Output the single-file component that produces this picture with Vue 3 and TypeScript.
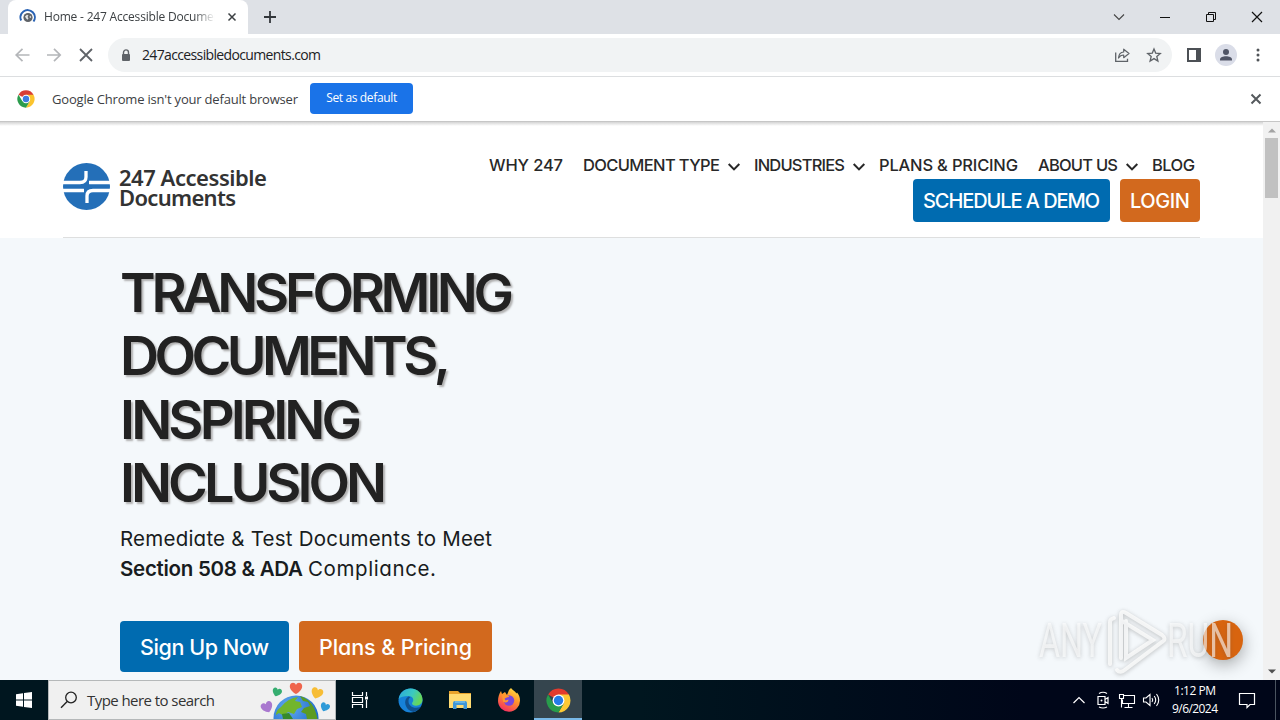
<script setup lang="ts">
import type { Directive } from 'vue'

interface NavItem {
  label: string
  width: number
  menu: boolean
}

const navItems: NavItem[] = [
  { label: 'WHY 247', width: 74, menu: false },
  { label: 'DOCUMENT TYPE', width: 137, menu: true },
  { label: 'INDUSTRIES', width: 91, menu: true },
  { label: 'PLANS & PRICING', width: 139, menu: false },
  { label: 'ABOUT US', width: 80, menu: true },
  { label: 'BLOG', width: 43, menu: false },
]

const headline: { text: string; width: number }[] = [
  { text: 'TRANSFORMING', width: 394 },
  { text: 'DOCUMENTS,', width: 331 },
  { text: 'INSPIRING', width: 242 },
  { text: 'INCLUSION', width: 267 },
]

// Spreads or tightens the letters of a label so that it fills a given width.
const vFit: Directive<HTMLElement, number> = {
  mounted(el, binding) {
    const count = (el.textContent ?? '').length
    const natural = el.getBoundingClientRect().width
    el.style.letterSpacing = `${(binding.value - natural) / Math.max(count - 1, 1)}px`
    el.style.width = `${binding.value}px`
  },
}
</script>

<template>
  <div class="desktop">
    <div class="tabstrip">
      <div class="tab">
        <svg class="favicon" width="18" height="18" viewBox="0 0 18 18">
          <path d="M2.200 12.500A7.200 7.200 0 1 1 14.500 13.500" fill="none" stroke="#2a63b4" stroke-width="2" />
          <circle cx="9" cy="9.500" r="4.600" fill="#5f6368" />
          <path d="M6 8.500 8 6.800l1.500.7-1 1.500 1 1.200-1 1.600-1.500-1.500zM11 7.500l1.300 1.500-.8 1-1-.8z" fill="#e4e6e8" />
        </svg>
        <span class="tab-title"><span v-fit="177" class="fit">Home - 247 Accessible Documen</span></span>
        <svg class="tab-close" width="10" height="10" viewBox="0 0 10 10"><path d="M1.500 1.500l7 7M8.500 1.500l-7 7" stroke="#3c4043" stroke-width="1.500" /></svg>
      </div>
      <svg class="new-tab" width="14" height="14" viewBox="0 0 14 14"><path d="M7 1v12M1 7h12" stroke="#33373b" stroke-width="1.800" /></svg>
      <div class="window-controls">
        <svg width="46" height="28" viewBox="0 0 46 28"><path d="M18 11.500l5 5 5-5" fill="none" stroke="#444" stroke-width="1.100" /></svg>
        <svg width="46" height="28" viewBox="0 0 46 28"><path d="M18 14.500h10" stroke="#111" /></svg>
        <svg width="46" height="28" viewBox="0 0 46 28"><path d="M18.500 11.500h7v7h-7zM20.500 11.500v-2h7v7h-2" fill="none" stroke="#111" /></svg>
        <svg width="46" height="28" viewBox="0 0 46 28"><path d="M18 9l10 10M28 9L18 19" stroke="#111" stroke-width="1.200" /></svg>
      </div>
    </div>

    <div class="toolbar">
      <svg class="nav-icon" width="32" height="20" viewBox="0 0 32 20"><path d="M16.500 3.800L10.200 10l6.300 6.200M10.200 10h13.300" fill="none" stroke="#b4b6b9" stroke-width="1.700" /></svg>
      <svg class="nav-icon" width="32" height="20" viewBox="0 0 32 20"><path d="M16 3.800l6.200 6.200-6.200 6.200M9 10h13.200" fill="none" stroke="#b4b6b9" stroke-width="1.700" /></svg>
      <svg class="nav-icon" width="32" height="20" viewBox="0 0 32 20"><path d="M10 4l12 12M22 4L10 16" stroke="#5f6368" stroke-width="1.800" /></svg>
      <div class="omnibox">
        <svg class="lock" width="10" height="13" viewBox="0 0 10 13"><path d="M2.500 6V3.400a2.500 2.500 0 0 1 5 0V6" fill="none" stroke="#5f6368" stroke-width="1.400" /><rect x="1" y="5" width="8" height="7" rx="1" fill="#5f6368" /></svg>
        <span v-fit="179" class="fit url">247accessibledocuments.com</span>
        <svg class="share" width="16" height="16" viewBox="0 0 16 16"><path d="M1.700 5.500v8.800h11.800v-2.600" fill="none" stroke="#5f6368" stroke-width="1.300" /><path d="M4.500 11c.3-4 2.200-5.800 5.200-6V2.200L15 6.500l-5.300 4.200V8C7.400 8 5.700 9 4.500 11z" fill="none" stroke="#5f6368" stroke-width="1.200" stroke-linejoin="round" /></svg>
        <svg width="16" height="16" viewBox="0 0 16 16"><path d="M8 1.900l1.700 4.200 4.600.4-3.500 3 1.100 4.500L8 11.600 4.100 14l1.100-4.500-3.500-3 4.600-.4z" fill="none" stroke="#5f6368" stroke-width="1.300" /></svg>
      </div>
      <svg class="side-panel" width="14" height="14" viewBox="0 0 14 14"><path d="M1 1h12v12H1z" fill="none" stroke="#4c5055" stroke-width="2" /><path d="M9 1h4v12H9z" fill="#4c5055" /></svg>
      <svg class="avatar" width="22" height="22" viewBox="0 0 22 22"><circle cx="11" cy="11" r="11" fill="#dadde8" /><circle cx="11" cy="8" r="3" fill="#505566" /><path d="M5 16.500v-1c0-2.200 3-3.300 6-3.300s6 1.100 6 3.300v1z" fill="#505566" /></svg>
      <svg width="4" height="14" viewBox="0 0 4 14"><circle cx="2" cy="2" r="1.500" fill="#505458" /><circle cx="2" cy="7" r="1.500" fill="#505458" /><circle cx="2" cy="12" r="1.500" fill="#505458" /></svg>
    </div>

    <div class="infobar">
      <svg width="18" height="18" viewBox="0 0 24 24">
        <path d="M12 12L2.030 6.200A11.500 11.500 0 0 1 21.970 6.200z" fill="#d93e35" />
        <path d="M12 6.300h10A11.500 11.500 0 0 1 12 23.500l5-8.700z" fill="#fbc42e" />
        <path d="M7 14.800L2.030 6.200A11.500 11.500 0 0 0 12 23.500l4.900-8.600z" fill="#2c9c4d" />
        <circle cx="12" cy="12" r="5.600" fill="#fff" /><circle cx="12" cy="12" r="4.300" fill="#3d7de2" />
      </svg>
      <span v-fit="246" class="fit info-text">Google Chrome isn't your default browser</span>
      <button class="default-btn"><span v-fit="71" class="fit">Set as default</span></button>
      <svg class="info-close" width="12" height="12" viewBox="0 0 12 12"><path d="M1.500 1.500l9 9M10.500 1.500l-9 9" stroke="#55595d" stroke-width="2" /></svg>
    </div>

    <div class="viewport">
      <main class="page">
        <header class="site-header">
          <div class="header-inner">
            <div class="brand">
              <svg width="47" height="47" viewBox="0 0 47 47">
                <circle cx="23.500" cy="23.500" r="23.500" fill="#246fb8" />
                <path d="M0 19.500h17c4 0 6-2.200 6-5.500V8M26 19.500h21M0 27.500h21M47 27.500H30c-4 0-6 2.200-6 5.500V40" fill="none" stroke="#fff" stroke-width="3.300" />
                <path d="M18.500 23.500l5-4 5 4-5 4z" fill="#246fb8" />
              </svg>
              <div class="brand-name">
                <span v-fit="148" class="fit">247 Accessible</span>
                <span v-fit="117" class="fit">Documents</span>
              </div>
            </div>
            <div class="header-right">
              <nav class="menu">
                <a v-for="item in navItems" :key="item.label">
                  <span v-fit="item.width" class="fit">{{ item.label }}</span>
                  <svg v-if="item.menu" width="14" height="10" viewBox="0 0 14 10"><path d="M1.700 2l5.300 5.400L12.300 2" fill="none" stroke="#282828" stroke-width="2" /></svg>
                </a>
              </nav>
              <div class="actions">
                <a class="btn blue"><span v-fit="177" class="fit">SCHEDULE A DEMO</span></a>
                <a class="btn orange"><span v-fit="60" class="fit">LOGIN</span></a>
              </div>
            </div>
          </div>
        </header>
        <section class="hero">
          <h1>
            <span v-for="line in headline" :key="line.text" class="line"><span v-fit="line.width" class="fit">{{ line.text }}</span></span>
          </h1>
          <p>
            <span class="line"><span v-fit="372" class="fit">Remediate &amp; Test Documents to Meet</span></span>
            <span class="line"><strong v-fit="183" class="fit">Section 508 &amp; ADA</strong><span v-fit="128" class="fit rest">Compliance.</span></span>
          </p>
          <div class="cta">
            <a class="btn blue"><span v-fit="129" class="fit">Sign Up Now</span></a>
            <a class="btn orange"><span v-fit="153" class="fit">Plans &amp; Pricing</span></a>
          </div>
        </section>
      </main>
      <div class="scrollbar">
        <svg width="8" height="5" viewBox="0 0 8 5"><path d="M0 4.500L4 .5l4 4z" fill="#a3a3a3" /></svg>
        <div class="thumb"></div>
        <svg class="down" width="8" height="5" viewBox="0 0 8 5"><path d="M0 .5l4 4 4-4z" fill="#505050" /></svg>
      </div>
      <div class="chat-bubble"></div>
      <svg class="watermark" width="210" height="76" viewBox="0 0 210 76">
        <g class="mark-text" font-family="Roboto, sans-serif" font-size="49" font-weight="400">
          <text x="9" y="55" textLength="63" lengthAdjust="spacingAndGlyphs">ANY</text>
          <text x="137" y="55" textLength="66" lengthAdjust="spacingAndGlyphs">RUN</text>
        </g>
        <g class="mark-play">
          <path d="M80 62V20q0-3 4-4M91 56V13q0-5 5-2l36 22q5 4 0 7L96 67q-6 5-9 1M96 19v37l27-18L92 19" />
        </g>
      </svg>
    </div>

    <footer class="taskbar">
      <div class="start">
        <svg width="16" height="16" viewBox="0 0 16 16"><path d="M0 2.200l7-1v6.300H0zM8 1.100L16 0v7.500H8zM0 8.500h7v6.300l-7-1zM8 8.500h8V16l-8-1.100z" fill="#fff" /></svg>
      </div>
      <div class="search">
        <svg width="18" height="18" viewBox="0 0 18 18"><circle cx="11" cy="6.500" r="5.300" fill="none" stroke="#222" stroke-width="1.300" /><path d="M7.200 10.500L1 16.700" stroke="#222" stroke-width="1.400" /></svg>
        <span v-fit="128" class="fit">Type here to search</span>
        <svg class="earth" width="76" height="38" viewBox="0 0 76 38">
          <defs>
            <radialGradient id="sea" cx="0.35" cy="0.25" r="0.75"><stop offset="0" stop-color="#63a9ef" /><stop offset="1" stop-color="#1663c7" /></radialGradient>
            <path id="heart" d="M0 6C-4 4-7 0-6-3C-5-6-1-6 0-3C1-6 5-6 6-3C7 0 4 4 0 6z" />
          </defs>
          <circle cx="37" cy="37" r="22.500" fill="url(#sea)" />
          <path d="M22 26q7-9 17-10l-3 4 5 1 2 5-5 2-3 5-6-2-4 4-5-3-3 2q0-5 5-8z" fill="#72b52c" />
          <path d="M41 15q14 4 17.500 23H48l-1-5-5-2 3-4 6-2-2-4-5-1z" fill="#5c9b22" />
          <path d="M23 33l7-1 4 6H24z" fill="#368a2b" />
          <use href="#heart" transform="translate(37 7)" fill="#ef654d" />
          <use href="#heart" transform="translate(18 11) rotate(18) scale(.75)" fill="#36ad70" />
          <use href="#heart" transform="translate(58 12) rotate(18) scale(.95)" fill="#f7bd35" />
          <use href="#heart" transform="translate(8 26) rotate(-22) scale(.95)" fill="#a978cf" />
          <use href="#heart" transform="translate(66 26) rotate(22) scale(.75)" fill="#2e9ad8" />
        </svg>
      </div>
      <div class="apps">
        <div class="app first">
          <svg width="18" height="18" viewBox="0 0 18 18"><path d="M1.500 1v3.500h10V1M1.500 17v-3.500h10V17M1.500 6.500h10v5h-10zM15.500 1v4M15.500 9v8" fill="none" stroke="#fff" stroke-width="1.200" /><path d="M14 5.500h3v3h-3z" fill="#fff" /></svg>
        </div>
        <div class="app">
          <svg width="25" height="25" viewBox="0 0 25 25">
            <defs>
              <linearGradient id="edgeTop" x1="0" y1="0" x2="1" y2=".4"><stop offset="0" stop-color="#2ba7dc" /><stop offset=".6" stop-color="#3bc9c1" /><stop offset="1" stop-color="#66d65b" /></linearGradient>
            </defs>
            <circle cx="12.500" cy="12.500" r="12" fill="#1681d8" />
            <path d="M.7 11C2 4 7 .5 12.500.5 20 .5 24.500 6 24.500 11.500c0 4-3 6.200-6.500 6.200-2.600 0-4-1.200-4-2.200s1.300-1.500 1.300-3.400c0-2.400-2.200-4-5.200-4C6 8.100 2.500 9 .7 11z" fill="url(#edgeTop)" />
            <path d="M10.500 8.500c-3 1.800-4 5-3 8.300 1 3.600 4 6.500 8 7.200 3-.6 5.500-2.600 7-5.200-6 2.700-12.300-.3-12-6 .1-1.800 1-3 2-3.600-.600-.5-1.400-.7-2-.7z" fill="#10518f" />
          </svg>
        </div>
        <div class="app">
          <svg width="22" height="20" viewBox="0 0 22 20"><path d="M0 1h9l2 2h11v4H0z" fill="#e8a32c" /><path d="M0 4h22v14H0z" fill="#ffdb72" /><path d="M4 19v-6q0-2 2-2h10q2 0 2 2v6h-3.500v-4h-7v4z" fill="#3f97d8" /><path d="M6 11h10v2H6z" fill="#67b5e5" /></svg>
        </div>
        <div class="app">
          <svg width="24" height="24" viewBox="0 0 24 24">
            <defs><linearGradient id="fox" x1=".8" y1="0" x2=".3" y2="1"><stop offset="0" stop-color="#ffe243" /><stop offset=".45" stop-color="#ff942b" /><stop offset="1" stop-color="#f52c62" /></linearGradient></defs>
            <path d="M12 2l2-2c1 2 4 3 5.500 5.500l.5-1c2 2 3 5 3 8A11 11 0 0 1 1 13C1 9 2 6 4 3l1 3 3-2 2 3z" fill="url(#fox)" />
            <circle cx="12" cy="12.500" r="5.200" fill="#7947db" />
            <path d="M5 7.500c3-1.500 6-.5 7.500 1.500-3 0-4 1.500-5 1.500l1 2 3-1c0 3-3 4-5.500 2z" fill="#ff9830" />
          </svg>
        </div>
        <div class="app active">
          <svg width="25" height="25" viewBox="0 0 24 24">
            <path d="M12 12L2.030 6.200A11.500 11.500 0 0 1 21.970 6.200z" fill="#e33b2e" />
            <path d="M12 6.300h10A11.500 11.500 0 0 1 12 23.500l5-8.700z" fill="#fcc934" />
            <path d="M7 14.800L2.030 6.200A11.500 11.500 0 0 0 12 23.500l4.900-8.600z" fill="#289c4b" />
            <circle cx="12" cy="12" r="5.700" fill="#fff" /><circle cx="12" cy="12" r="4.500" fill="#247ce8" />
          </svg>
        </div>
      </div>
      <div class="tray">
        <svg width="24" height="18" viewBox="0 0 24 18"><path d="M6.500 12l5.500-5.500 5.500 5.500" fill="none" stroke="#fff" stroke-width="1.200" /></svg>
        <svg width="24" height="18" viewBox="0 0 24 18"><path d="M7 5.500h7v8H7zM14 8.500l3-2v6l-3-2M8 2.500q4-2.500 8 0M8 16q4 2 8 0" fill="none" stroke="#fff" stroke-width="1.200" /><circle cx="10.500" cy="9.500" r="1" fill="#fff" /></svg>
        <svg width="24" height="18" viewBox="0 0 24 18"><path d="M9 4.500h10.500v8H7.500v-4M13.500 12.500v3.500M9.500 16.500h8M4.500 3.500h4v4h-4zM6.500 7.500v9" fill="none" stroke="#fff" stroke-width="1.100" /></svg>
        <svg width="24" height="18" viewBox="0 0 24 18"><path d="M4.500 7h2.500l4-3.500v11L7 11H4.500zM13 7q1.500 2 0 4M15.200 5q3 4 0 8M17.500 3q4.500 6 0 12" fill="none" stroke="#fff" stroke-width="1.100" /></svg>
        <div class="clock"><span v-fit="42" class="fit">1:12 PM</span><span v-fit="46" class="fit">9/6/2024</span></div>
        <svg class="notify" width="18" height="18" viewBox="0 0 18 18"><path d="M1.500 2.500h15v11h-4.500l-3 3v-3H1.500z" fill="none" stroke="#fff" stroke-width="1.200" /></svg>
        <div class="show-desktop"></div>
      </div>
    </footer>
  </div>
</template>

<style>
body {
  overflow: hidden;
}
</style>

<style scoped>
* {
  box-sizing: border-box;
}
svg {
  display: block;
  flex: none;
}
.desktop {
  width: 1280px;
  height: 720px;
  display: flex;
  flex-direction: column;
  overflow: hidden;
  background: #fff;
  font-family: "Open Sans", "Noto Sans", sans-serif;
}
.fit {
  display: inline-block;
  white-space: nowrap;
}
.tabstrip {
  height: 34px;
  flex: none;
  display: flex;
  align-items: center;
  background: #dee1e6;
  padding-left: 8px;
}
.tab {
  width: 240px;
  height: 34px;
  display: flex;
  align-items: center;
  padding: 0 11px;
  border-radius: 8px 8px 0 0;
  background: #fff;
}
.tab-title {
  width: 171px;
  margin-left: 7px;
  overflow: hidden;
  font-size: 12px;
  line-height: 20px;
  color: #3c4043;
  mask-image: linear-gradient(to right, #000 150px, transparent 171px);
}
.tab-close {
  margin-left: 12px;
}
.new-tab {
  margin-left: 15px;
}
.window-controls {
  margin-left: auto;
  display: flex;
}
.toolbar {
  height: 42px;
  flex: none;
  display: flex;
  align-items: center;
  padding: 0 20px 0 6px;
}
.omnibox {
  width: 1064px;
  height: 34px;
  margin-left: 6px;
  padding: 0 10px 0 13px;
  display: flex;
  align-items: center;
  border-radius: 17px;
  background: #f1f3f4;
}
.url {
  margin-left: 11px;
  padding-bottom: 1px;
  font-size: 14px;
  color: #202124;
}
.share {
  margin-left: auto;
  margin-right: 16px;
}
.side-panel {
  margin-left: 15px;
}
.avatar {
  margin: 0 19px 0 14px;
}
.infobar {
  height: 46px;
  flex: none;
  display: flex;
  align-items: center;
  padding: 0 18px 1px 17px;
  border-top: 1px solid #dcdee0;
  border-bottom: 1px solid #c6c6c6;
}
.info-text {
  margin-left: 17px;
  font-size: 13px;
  color: #3c4043;
}
.default-btn {
  width: 103px;
  height: 31px;
  margin: 0 0 1px 12px;
  padding: 0 0 1px;
  border: 0;
  border-radius: 4px;
  background: #1a73e8;
  color: #fff;
  font: 12px "Open Sans", sans-serif;
}
.info-close {
  margin-left: auto;
}
.viewport {
  position: relative;
  flex: 1;
  min-height: 0;
  display: flex;
  background: linear-gradient(#d4d4d4, #fff 4px);
}
.page {
  width: 1263px;
  display: flex;
  flex-direction: column;
  font-family: Inter, sans-serif;
  font-feature-settings: "cv11";
}
.site-header {
  height: 116px;
  flex: none;
  padding: 0 63px;
}
.header-inner {
  height: 116px;
  display: flex;
  justify-content: space-between;
  border-bottom: 1px solid #dedfdf;
}
.brand {
  display: flex;
  padding-top: 41px;
}
.brand-name {
  display: flex;
  flex-direction: column;
  align-items: flex-start;
  margin-left: 9px;
  padding-top: 4px;
  font: 600 22px/20px "Noto Sans", sans-serif;
  color: #333;
}
.header-right {
  display: flex;
  flex-direction: column;
  align-items: flex-end;
  padding-top: 31px;
}
.menu {
  height: 26px;
  display: flex;
  align-items: center;
  padding: 0 5px 2px 0;
  gap: 20px;
  font-size: 16.500px;
  font-weight: 500;
  color: #282828;
}
.menu a {
  display: flex;
  align-items: center;
}
.menu svg {
  margin: 4px -7px 0 7px;
}
.actions {
  display: flex;
  gap: 10px;
}
.btn {
  display: flex;
  align-items: center;
  justify-content: center;
  border-radius: 4px;
  color: #fff;
  font-weight: 500;
}
.blue {
  background: #006bb0;
}
.orange {
  background: #d2691e;
}
.actions .btn {
  height: 43px;
  padding: 0 10px;
  font-size: 20px;
}
.hero {
  flex: 1;
  padding: 23px 0 0 120px;
  background: #f4f8fb;
}
.line {
  display: block;
}
h1 {
  margin: 0;
  font-size: 54px;
  font-weight: 600;
  line-height: 63.300px;
  color: #222;
  text-shadow: 2px 2px 2px #b0b0b0;
}
p {
  margin: 10px 0 37px;
  font-size: 20.500px;
  line-height: 30px;
  color: #181c20;
  font-weight: 400;
}
strong {
  font-weight: 600;
}
.rest {
  margin-left: 5px;
}
.cta {
  display: flex;
  gap: 10px;
}
.cta .btn {
  height: 51px;
  padding: 0 20px;
  font-size: 21.500px;
}
.scrollbar {
  width: 17px;
  display: flex;
  flex-direction: column;
  align-items: center;
  padding: 6px 0;
  background: #f1f1f1;
}
.thumb {
  width: 13px;
  height: 60px;
  margin-top: 5px;
  background: #c1c1c1;
}
.down {
  margin-top: auto;
}
.chat-bubble {
  position: absolute;
  left: 1203px;
  top: 498px;
  width: 40px;
  height: 40px;
  border-radius: 50%;
  background: #d8640f;
  box-shadow: 1px 5px 16px rgba(0, 0, 0, 0.3);
}
.watermark {
  position: absolute;
  left: 1030px;
  top: 480px;
  filter: drop-shadow(0 1px 2px rgba(80, 80, 80, 0.45));
}
.mark-text {
  fill: rgba(255, 255, 255, 0.6);
}
.mark-play {
  fill: none;
  stroke: rgba(255, 255, 255, 0.75);
  stroke-width: 4;
  stroke-linecap: round;
}
.taskbar {
  height: 40px;
  flex: none;
  display: flex;
  background: linear-gradient(90deg, #00161f, #00161f 50%, #000619 80%);
  color: #fff;
}
.start {
  width: 48px;
  display: flex;
  align-items: center;
  justify-content: center;
}
.search {
  width: 288px;
  display: flex;
  align-items: center;
  padding-left: 11px;
  border: 1px solid #b5b8b9;
  background: #f0f0f0;
  color: #333;
  font-size: 15px;
}
.search .fit {
  margin-left: 9px;
}
.earth {
  margin-left: auto;
}
.apps {
  display: flex;
}
.app {
  width: 49px;
  height: 40px;
  display: flex;
  align-items: center;
  justify-content: center;
}
.app.first {
  width: 50px;
  padding-right: 2px;
}
.app.active {
  width: 48px;
  margin-left: 1px;
  padding-top: 2px;
  border-bottom: 2px solid #79b9e8;
  background: #35454e;
}
.tray {
  margin-left: auto;
  display: flex;
  align-items: center;
}
.clock {
  width: 64px;
  display: flex;
  flex-direction: column;
  align-items: center;
  font-size: 12px;
  line-height: 18px;
}
.notify {
  margin: 0 19px 0 11px;
}
.show-desktop {
  width: 5px;
  height: 40px;
  border-left: 1px solid #4a5460;
}
</style>
